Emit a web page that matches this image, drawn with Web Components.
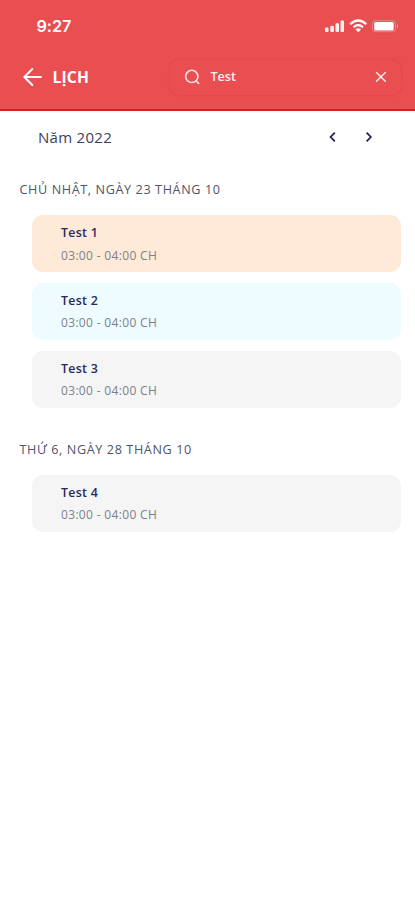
<!DOCTYPE html>
<html lang="vi"><head><meta charset="utf-8"><title>Lịch</title>
<style>html,body{margin:0;background:#fff}body{font-family:"Open Sans","Noto Sans",sans-serif}</style></head>
<body>
<calendar-screen></calendar-screen>
<script>
const define = (name, html) => customElements.define(name, class extends HTMLElement {
  constructor() {
    super();
    const t = document.createElement('template');
    t.innerHTML = html;
    this.attachShadow({ mode: 'open' }).append(t.content.cloneNode(true));
  }
});

define('status-bar', `<style>
:host{display:flex;height:52px;box-sizing:border-box;padding:0 15px 0 36.5px;justify-content:space-between;align-items:center;color:#fff}
time{font:600 16.3px/20px Inter,sans-serif;letter-spacing:-.1px}
svg{display:block;width:76px;height:16px}
</style><time>9:27</time>
<svg viewBox="0 0 76 16" fill="#fff">
<g opacity=".92"><rect x="1" y="9.6" width="3.5" height="4.4" rx="1"/><rect x="6.3" y="7.8" width="3.5" height="6.2" rx="1"/><rect x="11.5" y="5.2" width="3.5" height="8.8" rx="1"/><rect x="16.5" y="2.4" width="3.5" height="11.6" rx="1"/></g>
<path d="M26.2 6.2Q34.2-1.2 42.2 6.2" fill="none" stroke="#fff" stroke-width="2.2"/>
<path d="M29.4 9.2Q34.2 5 39 9.2" fill="none" stroke="#fff" stroke-width="2"/>
<path d="M31.4 11.3Q34.2 9.2 37 11.3L34.2 14.2Z"/>
<rect x="48.4" y="2.7" width="23.2" height="11" rx="3" fill="none" stroke="#fff" stroke-opacity=".3"/>
<rect x="50.2" y="4.1" width="19.5" height="8.3" rx="1.5"/><path d="M73 6.2Q75 8.2 73 10.2Z" opacity=".5"/>
</svg>`);

define('search-field', `<style>
:host{display:flex;box-sizing:border-box;width:233px;height:37px;border:1px solid #e2484c;border-radius:10px;align-items:center;padding:0 13px 0 14px;color:#fff;box-shadow:0 0 2px #dc424860}
svg{display:block;flex:none}
span{flex:1;font-size:12.6px;line-height:20px;font-weight:600;margin-left:9.5px;opacity:.92}
</style>
<svg width="17" height="17" viewBox="0 0 17 17" fill="none" stroke="#ffe4e4" stroke-width="1.6" stroke-linecap="round"><circle cx="7.8" cy="7.4" r="6.1"/><path d="M12.2 12L14.6 14.4"/></svg>
<span><slot></slot></span>
<svg width="14" height="14" viewBox="0 0 14 14" fill="none" stroke="#ffeaea" stroke-width="1.5" stroke-linecap="round"><path d="M2.5 2.5L11.3 11.3M11.3 2.5L2.5 11.3"/></svg>`);

define('app-header', `<style>
:host{display:block;height:111px;box-sizing:border-box;background:#e94e51;border-bottom:2px solid #d42322}
nav{display:flex;align-items:center;height:50px;padding:0 13px 0 22px}
h1{margin:0 0 0 9.5px;font-size:15.6px;line-height:24px;font-weight:700;color:#fff;flex:1;letter-spacing:.2px}
svg{display:block}
</style><status-bar></status-bar><nav>
<svg width="21" height="20" viewBox="0 0 21 20" fill="none" stroke="#fff" stroke-width="1.9" stroke-linecap="round" stroke-linejoin="round"><path d="M19 10H2.5M10.3 2L2.3 10L10.3 18"/></svg>
<h1><slot></slot></h1><slot name="search"></slot></nav>`);

define('year-picker', `<style>
:host{display:flex;height:52px;align-items:center;padding:0 40px 0 38px;color:#3c3e60;font-size:15px;letter-spacing:.3px;justify-content:space-between}
div{display:flex;gap:24px}svg{display:block}
</style><span><slot></slot></span><div>
<svg width="12" height="12" viewBox="0 0 12 12" fill="none" stroke="#24224f" stroke-width="1.8"><path d="M7.8 1.6L3.6 6L7.8 10.4"/></svg>
<svg width="12" height="12" viewBox="0 0 12 12" fill="none" stroke="#24224f" stroke-width="1.8"><path d="M3.6 1.6L7.8 6L3.6 10.4"/></svg></div>`);

define('event-card', `<style>
:host{display:block;height:57px;box-sizing:border-box;border-radius:11px;background:var(--tone,#f5f5f5);padding:8px 29.5px 0}
b{display:block;font-size:12.4px;line-height:20px;font-weight:600;color:#2a2862;letter-spacing:.3px}
span{display:block;font-size:12px;line-height:20px;margin-top:2.4px;color:#7c808c;letter-spacing:.33px}
</style><b><slot></slot></b><span><slot name="time"></slot></span>`);

define('day-group', `<style>
:host{display:block}
h2{margin:0;padding-left:19.5px;height:52.2px;line-height:53px;font-size:12.6px;font-weight:400;color:#505369;letter-spacing:.62px;white-space:nowrap}
div{display:grid;row-gap:10.7px;padding:0 14px 0 31.5px}
</style><h2><slot name="day"></slot></h2><div><slot></slot></div>`);

define('calendar-screen', `<style>
:host{display:block;height:900px;overflow:hidden;background:#fff}
day-group+day-group{margin-top:15.2px}
.peach{--tone:#feead6}.aqua{--tone:#effcff}
</style>
<app-header>LỊCH<search-field slot="search">Test</search-field></app-header>
<year-picker>Năm 2022</year-picker>
<day-group><span slot="day">CHỦ NHẬT, NGÀY 23 THÁNG 10</span>
<event-card class="peach">Test 1<span slot="time">03:00 - 04:00 CH</span></event-card>
<event-card class="aqua">Test 2<span slot="time">03:00 - 04:00 CH</span></event-card>
<event-card>Test 3<span slot="time">03:00 - 04:00 CH</span></event-card></day-group>
<day-group><span slot="day">THỨ 6, NGÀY 28 THÁNG 10</span>
<event-card>Test 4<span slot="time">03:00 - 04:00 CH</span></event-card></day-group>`);
</script></body></html>
